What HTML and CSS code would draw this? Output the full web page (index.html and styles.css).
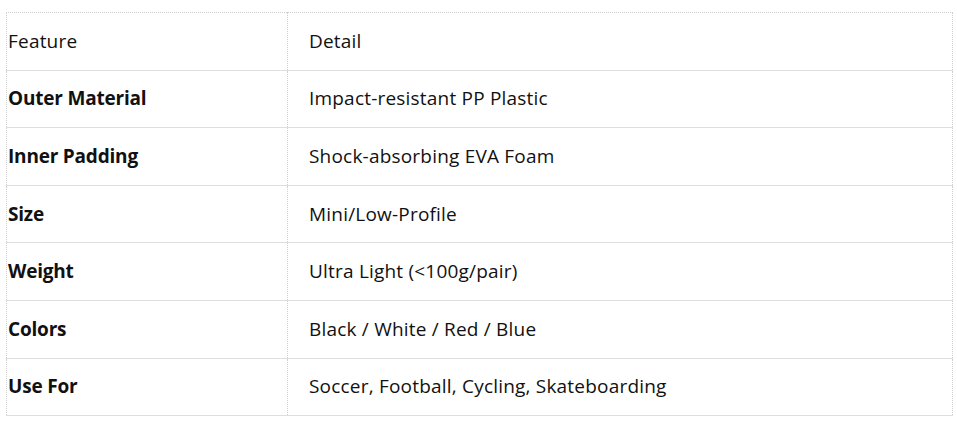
FILE: index.html
```html
<!DOCTYPE html>
<html>
<head>
<meta charset="utf-8">
<link rel="stylesheet" href="styles.css">
</head>
<body>
<table class="spec">
  <tr><td class="key plain">Feature</td><td class="val">Detail</td></tr>
  <tr><td class="key">Outer Material</td><td class="val">Impact-resistant PP Plastic</td></tr>
  <tr><td class="key">Inner Padding</td><td class="val">Shock-absorbing EVA Foam</td></tr>
  <tr><td class="key">Size</td><td class="val">Mini/Low-Profile</td></tr>
  <tr><td class="key">Weight</td><td class="val">Ultra Light (&lt;100g/pair)</td></tr>
  <tr><td class="key">Colors</td><td class="val">Black / White / Red / Blue</td></tr>
  <tr><td class="key">Use For</td><td class="val">Soccer, Football, Cycling, Skateboarding</td></tr>
</table>
</body>
</html>
```
FILE: styles.css
```css
html, body {
  margin: 0;
  padding: 0;
  background: #fff;
}
body {
  padding: 12px 0 0 6px;
  font-family: "Open Sans", "Noto Sans", sans-serif;
  font-size: 19px;
  color: #111;
}
.spec {
  border-collapse: collapse;
  width: 947px;
  border: 1px dotted #cfcfcf;
  table-layout: fixed;
}
.spec td {
  height: 56.6px;
  padding: 0;
  border-bottom: 1px solid #dedede;
  vertical-align: middle;
  line-height: 1.2;
}
.spec .key {
  width: 279px;
  padding-left: 1px;
  font-weight: 700;
  letter-spacing: -0.2px;
  border-right: 1px dotted #cfcfcf;
}
.spec .key.plain {
  font-weight: 400;
  letter-spacing: 0.2px;
}
.spec .val {
  padding-left: 21px;
  letter-spacing: 0.2px;
}
```
